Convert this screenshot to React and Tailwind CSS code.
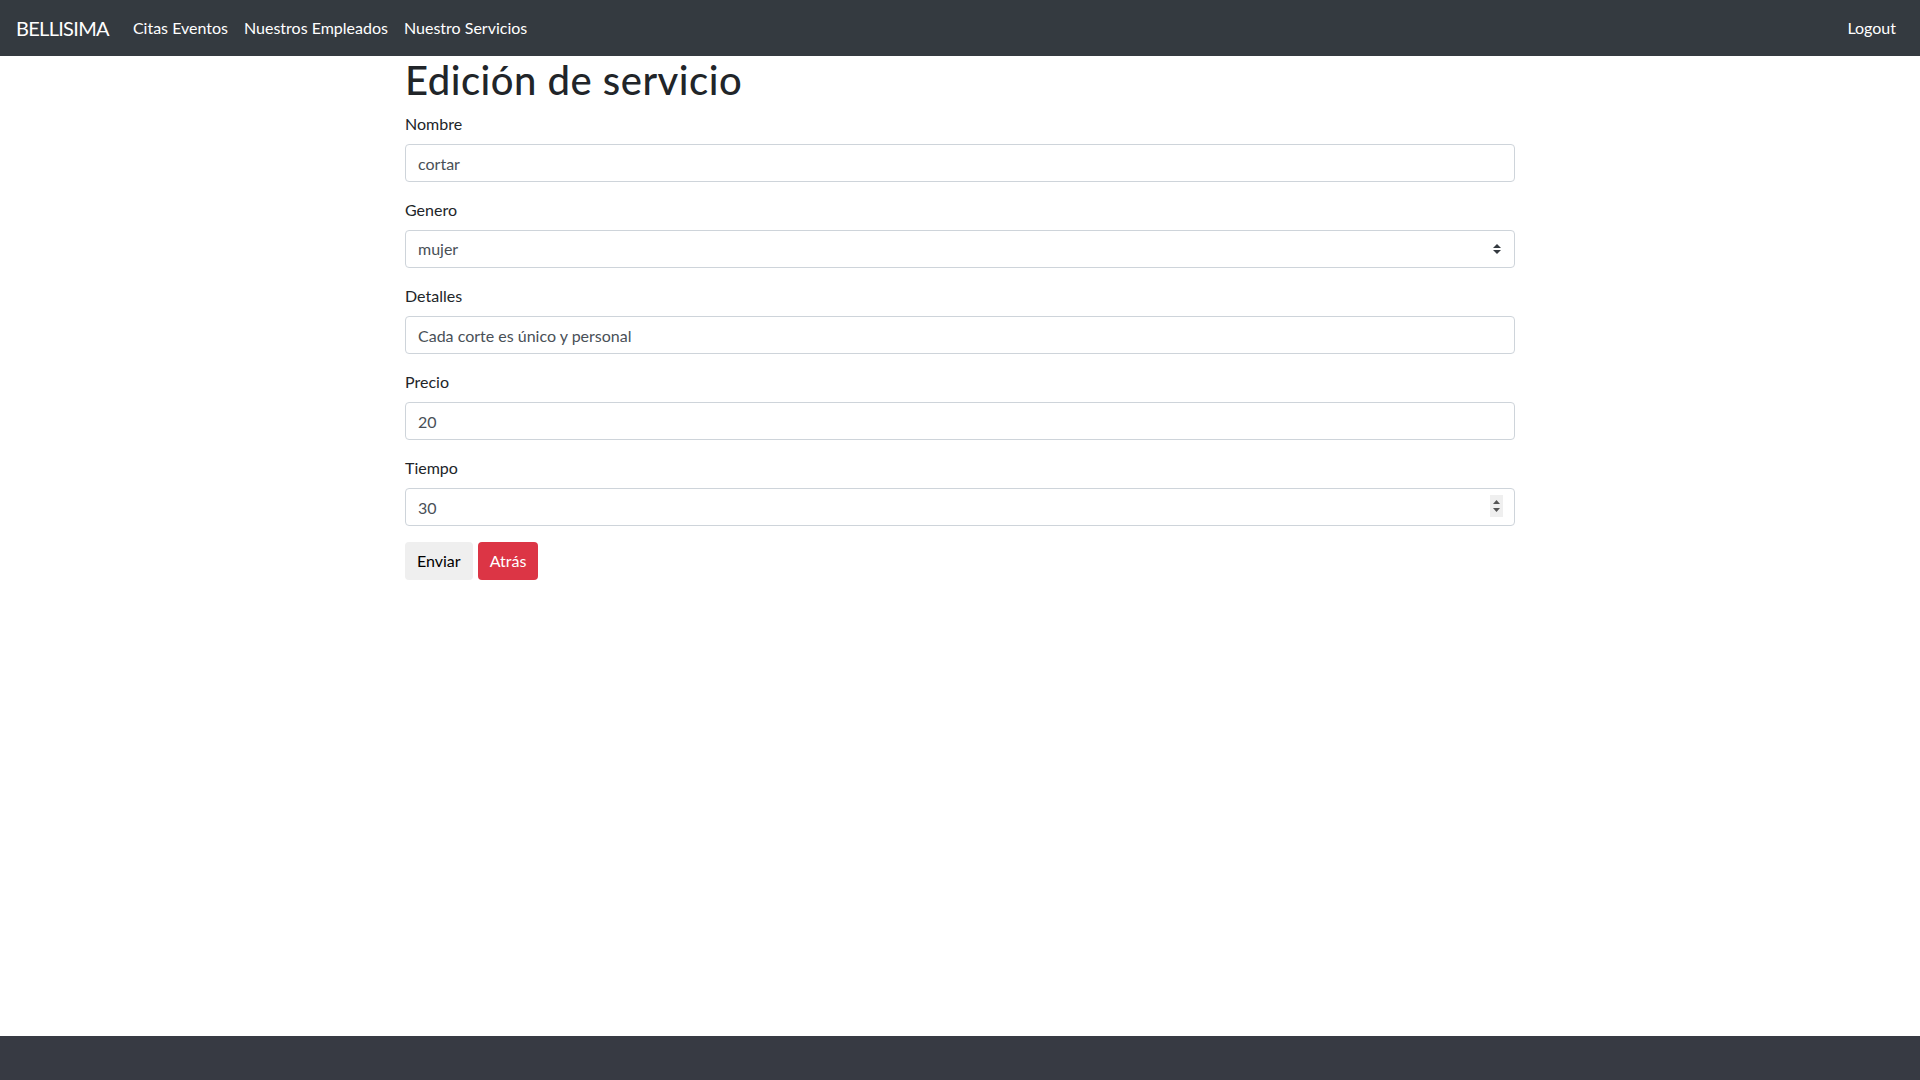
export default function App() {
  const font = { fontFamily: 'Lato, "Noto Sans", sans-serif' }
  return (
    <div className="min-h-screen flex flex-col bg-white text-[#212529]" style={font}>
      <header className="bg-[#343a40] h-[56px] px-4 flex items-center justify-between">
        <div className="flex items-center">
          <a className="text-white text-[20px] leading-[30px] py-[5px] mr-4 tracking-[-0.7px]">BELLISIMA</a>
          <nav className="flex">
            <a className="text-white text-base leading-6 px-2 py-2">Citas Eventos</a>
            <a className="text-white text-base leading-6 px-2 py-2">Nuestros Empleados</a>
            <a className="text-white text-base leading-6 px-2 py-2">Nuestro Servicios</a>
          </nav>
        </div>
        <a className="text-white text-base leading-6 px-2 py-2">Logout</a>
      </header>

      <main className="flex-1">
        <div className="mx-auto w-[1140px] px-[15px]">
          <h1 className="text-[40px] leading-[48px] font-medium mb-2 tracking-[0.5px]">Edición de servicio</h1>
          <form>
            <div className="mb-4">
              <label className="block text-base leading-6 mb-2">Nombre</label>
              <input
                defaultValue="cortar"
                className="block w-full h-[38px] px-3 text-base text-[#495057] border border-[#ced4da] rounded"
              />
            </div>
            <div className="mb-4">
              <label className="block text-base leading-6 mb-2">Genero</label>
              <div className="relative">
                <select
                  defaultValue="mujer"
                  className="block w-full h-[38px] pl-3 pr-8 text-base text-[#495057] bg-white border border-[#ced4da] rounded appearance-none"
                >
                  <option>mujer</option>
                  <option>hombre</option>
                </select>
                <svg className="absolute right-[14px] top-[14px] pointer-events-none" width="8" height="10" viewBox="0 0 4 5">
                  <path fill="#343a40" d="M2 0L0 2h4zm0 5L0 3h4z" />
                </svg>
              </div>
            </div>
            <div className="mb-4">
              <label className="block text-base leading-6 mb-2">Detalles</label>
              <input
                defaultValue="Cada corte es único y personal"
                className="block w-full h-[38px] px-3 text-base text-[#495057] border border-[#ced4da] rounded"
              />
            </div>
            <div className="mb-4">
              <label className="block text-base leading-6 mb-2">Precio</label>
              <input
                defaultValue="20"
                className="block w-full h-[38px] px-3 text-base text-[#495057] border border-[#ced4da] rounded"
              />
            </div>
            <div className="mb-4">
              <label className="block text-base leading-6 mb-2">Tiempo</label>
              <div className="relative">
                <input
                  defaultValue="30"
                  className="block w-full h-[38px] px-3 text-base text-[#495057] border border-[#ced4da] rounded"
                />
                <div className="absolute right-[12px] top-[7px] w-[13px] h-[22px] bg-[#efefef] flex flex-col items-center justify-center gap-[4px]">
                  <svg width="7" height="4" viewBox="0 0 7 4"><path fill="#555" d="M3.5 0L7 4H0z" /></svg>
                  <svg width="7" height="4" viewBox="0 0 7 4"><path fill="#555" d="M0 0h7L3.5 4z" /></svg>
                </div>
              </div>
            </div>
            <div className="flex gap-[5px]">
              <button type="button" className="h-[38px] px-3 text-base text-black bg-[#efefef] rounded">Enviar</button>
              <button type="button" className="h-[38px] px-3 text-base text-white bg-[#dc3545] rounded">Atrás</button>
            </div>
          </form>
        </div>
      </main>

      <footer className="bg-[#373a43] h-[44px]"></footer>
    </div>
  )
}
